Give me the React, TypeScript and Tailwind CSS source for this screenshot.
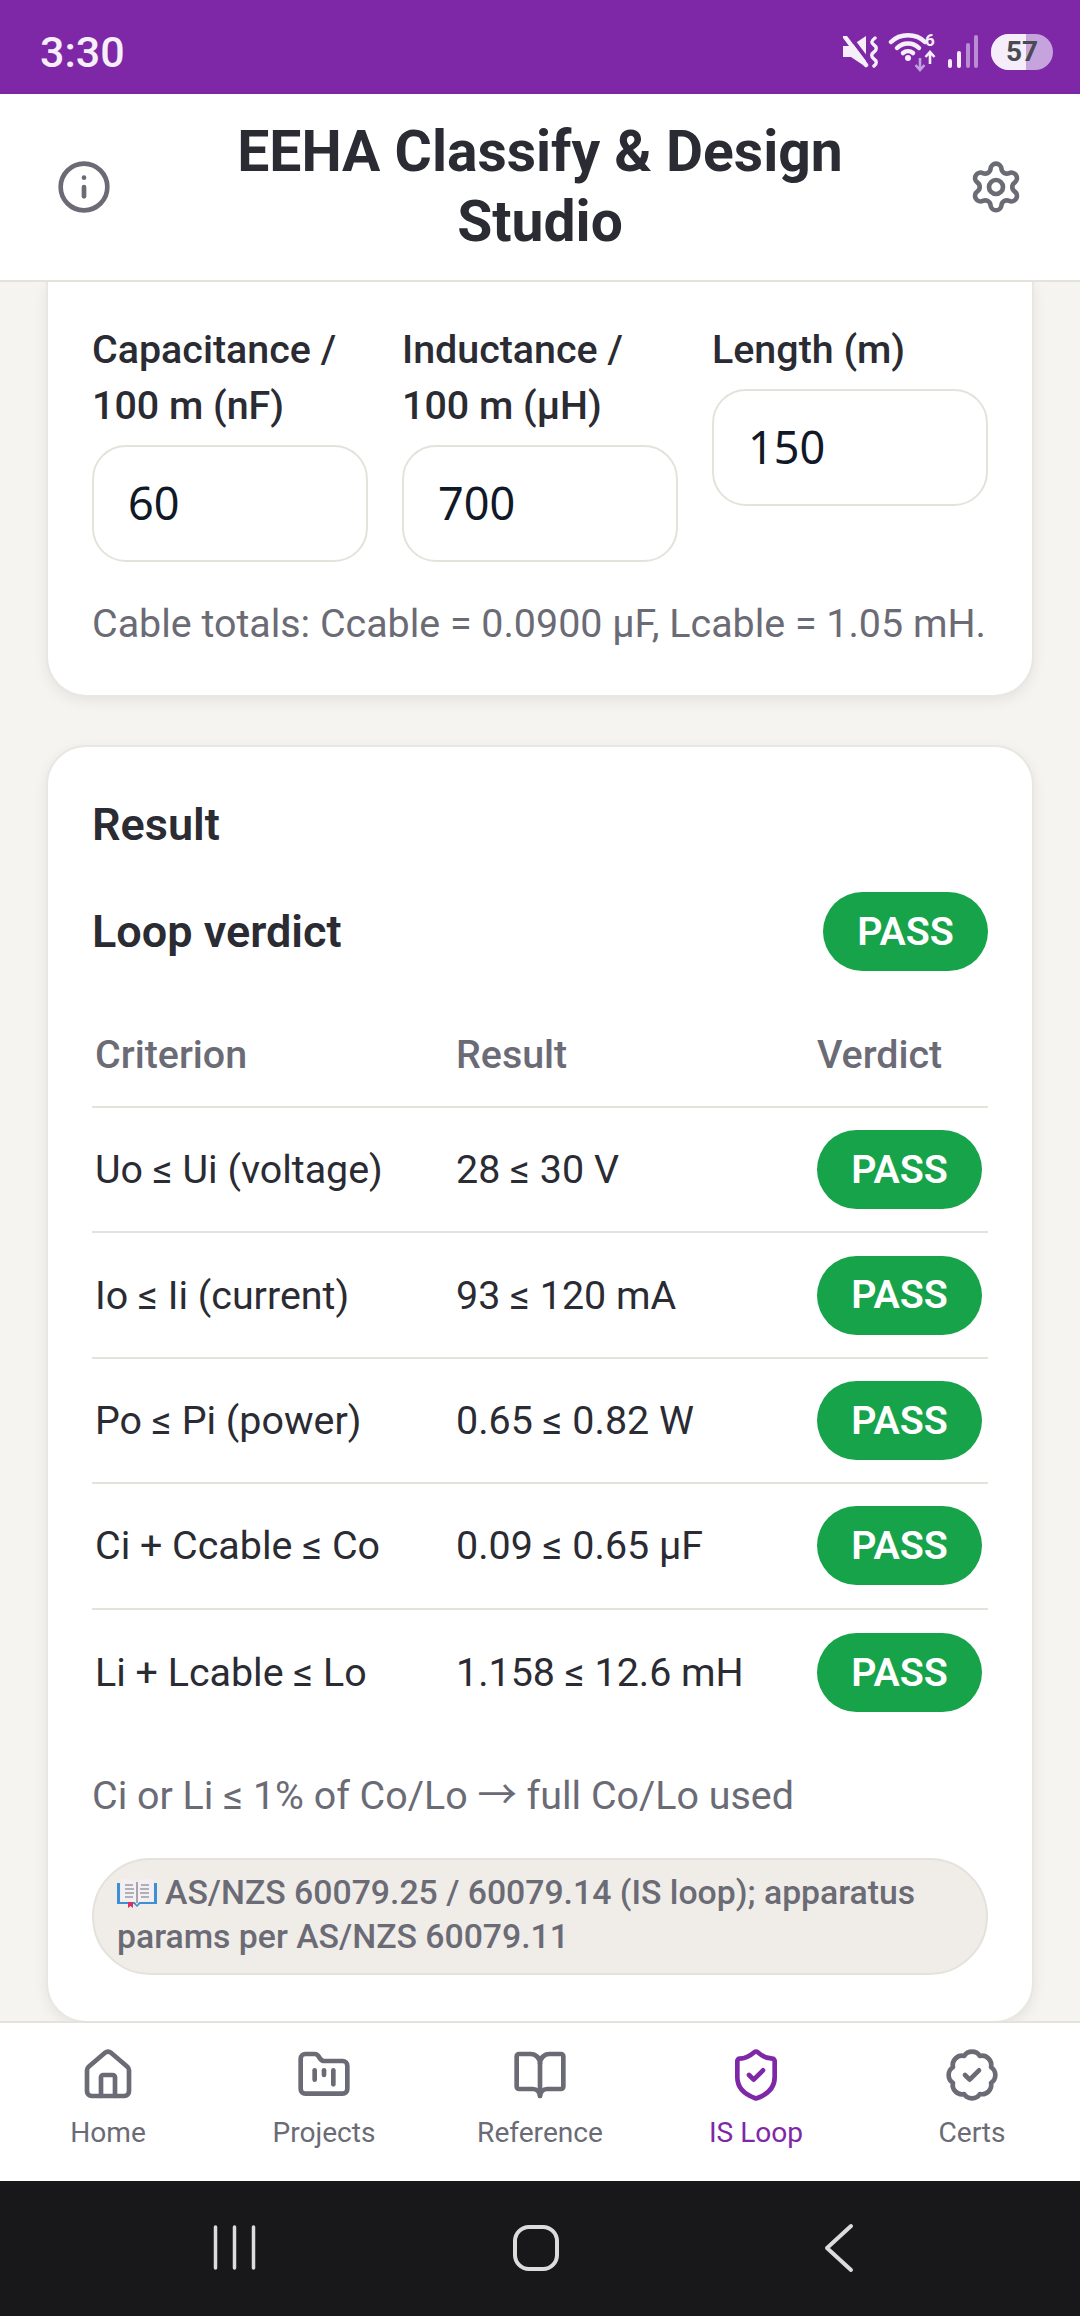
import { BadgeCheck, BookOpen, FolderKanban, House, Info, Settings, ShieldCheck } from 'lucide-react'

const rows = [
  ['Uo ≤ Ui (voltage)', '28 ≤ 30 V'],
  ['Io ≤ Ii (current)', '93 ≤ 120 mA'],
  ['Po ≤ Pi (power)', '0.65 ≤ 0.82 W'],
  ['Ci + Ccable ≤ Co', '0.09 ≤ 0.65 µF'],
  ['Li + Lcable ≤ Lo', '1.158 ≤ 12.6 mH'],
]

const navItems = [
  { label: 'Home', icon: House },
  { label: 'Projects', icon: FolderKanban },
  { label: 'Reference', icon: BookOpen },
  { label: 'IS Loop', icon: ShieldCheck, active: true },
  { label: 'Certs', icon: BadgeCheck },
]

function Pass() {
  return (
    <span className="flex h-[79px] w-[165px] items-center justify-center rounded-full bg-[#16a34a] text-[39.4px] leading-none font-semibold text-white">
      PASS
    </span>
  )
}

function Field({ label, value }: { label: string; value: string }) {
  return (
    <div>
      <label className="mb-[11px] block text-[39.4px] leading-[56px] font-medium text-[#2a2b33]">{label}</label>
      <div className="flex h-[117px] items-center rounded-[34px] border-2 border-[#e4e2db] bg-white pb-[2px] pl-[34px] font-['Noto_Sans',sans-serif] text-[45px] text-[#111827]">
        {value}
      </div>
    </div>
  )
}

function StatusIcons() {
  return (
    <div className="flex items-center">
      {/* mute */}
      <svg width="35" height="32" viewBox="0 0 35 32" className="mr-[10px]">
        <path d="M0 10h8L23 0v31L8 21H0z" fill="#f6effa" />
        <path d="M5 -2l22 29" stroke="#7e28a8" strokeWidth="4" />
        <path d="M2 1l21 28" stroke="#f6effa" strokeWidth="4.500" strokeLinecap="round" />
        <path d="M32 2c-4 3-4 5-1 7s3 5 0 7-3 5 0 7 3 5 0 7" stroke="#f6effa" strokeWidth="3.400" fill="none" strokeLinecap="round" />
      </svg>
      {/* wifi */}
      <div className="relative mr-[11px] h-[40px] w-[49px]">
        <svg width="49" height="40" viewBox="0 0 49 40" className="absolute top-0 left-0">
          <path d="M3 10c9-9 25-9 34 0" stroke="#f6effa" strokeWidth="4.500" fill="none" strokeLinecap="round" />
          <path d="M9 16c6-6 16-6 22 0" stroke="#f6effa" strokeWidth="4.500" fill="none" strokeLinecap="round" />
          <path d="M15 21c3-2.500 7-2.500 10 0" stroke="#f6effa" strokeWidth="4.500" fill="none" strokeLinecap="round" />
          <circle cx="20" cy="26" r="3" fill="#f6effa" />
          <path d="M32 26v12M27.500 33l4.500 5 4.500-5" stroke="#c39fdc" strokeWidth="2.600" fill="none" />
          <path d="M42 32V20M37.500 25l4.500-5 4.500 5" stroke="#f6effa" strokeWidth="2.600" fill="none" />
        </svg>
        <span className="absolute top-[-1px] left-[37px] text-[17px] leading-[18px] font-bold text-[#f6effa]">6</span>
      </div>
      {/* signal */}
      <svg width="30" height="34" viewBox="0 0 30 34" className="mr-[13px]">
        <rect x="0" y="24" width="4" height="9" rx="2" fill="#f6effa" />
        <rect x="9" y="16" width="4" height="17" rx="2" fill="#f6effa" />
        <rect x="18" y="8" width="4" height="25" rx="2" fill="#b98cd4" />
        <rect x="26" y="0" width="4" height="33" rx="2" fill="#b98cd4" />
      </svg>
      {/* battery */}
      <div className="relative flex h-[36px] w-[62px] items-center justify-center overflow-hidden rounded-full bg-[#c7a3de]">
        <div className="absolute inset-y-0 left-0 w-[35px] bg-[#f5eefa]" />
        <span className="relative text-[28px] leading-none font-bold text-[#4a4a52]">57</span>
      </div>
    </div>
  )
}

export default function App() {
  return (
    <div className="flex h-[2316px] w-[1080px] flex-col overflow-hidden bg-[#f5f4f0] font-['Roboto',sans-serif]">
      <div className="flex h-[94px] shrink-0 items-center justify-between bg-[#7e28a8] pt-[10px] pr-[27px] pl-[40px]">
        <span className="text-[43px] font-medium text-[#f6effa]">3:30</span>
        <StatusIcons />
      </div>

      <header className="flex h-[188px] shrink-0 items-center justify-between border-b-2 border-[#e4e2db] bg-white px-[56px]">
        <Info size={56} strokeWidth={2} className="text-[#6b6b76]" />
        <h1 className="w-[720px] text-center text-[57px] leading-[70px] font-bold text-[#2a2b33]">EEHA Classify &amp; Design Studio</h1>
        <Settings size={56} strokeWidth={2} className="text-[#6b6b76]" />
      </header>

      <main className="flex h-[1739px] shrink-0 flex-col gap-[48px] overflow-hidden px-[46px]">
        <section className="rounded-b-[40px] border-x-2 border-b-2 border-[#e9e7e1] bg-white px-[44px] pt-[40px] pb-[43px] shadow-[0_4px_14px_rgba(0,0,0,0.07)]">
          <div className="grid grid-cols-3 items-start gap-[34px]">
            <Field label="Capacitance / 100 m (nF)" value="60" />
            <Field label="Inductance / 100 m (µH)" value="700" />
            <Field label="Length (m)" value="150" />
          </div>
          <p className="mt-[34px] text-[39.4px] leading-[56px] whitespace-nowrap text-[#6b6b76]">Cable totals: Ccable = 0.0900 µF, Lcable = 1.05 mH.</p>
        </section>

        <section className="rounded-[40px] border-2 border-[#e9e7e1] bg-white px-[44px] pt-[46px] pb-[46px] shadow-[0_4px_14px_rgba(0,0,0,0.07)]">
          <h2 className="text-[45px] leading-[63px] font-semibold text-[#2a2b33]">Result</h2>
          <div className="mt-[36px] flex h-[79px] items-center justify-between">
            <span className="text-[45px] font-semibold text-[#2a2b33]">Loop verdict</span>
            <Pass />
          </div>

          <div className="mt-[22px] grid h-[115px] grid-cols-[361px_361px_1fr] items-center border-b-2 border-[#e4e2db] pt-[10px] pl-[3px] text-[39.4px] font-medium text-[#6b6b76]">
            <span>Criterion</span>
            <span>Result</span>
            <span>Verdict</span>
          </div>
          {rows.map(([name, result], i) => (
            <div
              key={name}
              className={`grid h-[125.4px] grid-cols-[361px_361px_1fr] items-center pl-[3px] text-[39.4px] text-[#2a2b33] ${i < rows.length - 1 ? 'border-b-2 border-[#e4e2db]' : ''}`}
            >
              <span>{name}</span>
              <span>{result}</span>
              <Pass />
            </div>
          ))}

          <p className="mt-[29px] text-[39.4px] leading-[56px] text-[#6b6b76]">
            Ci or Li ≤ 1% of Co/Lo <span className="font-['Noto_Sans_CJK_SC',sans-serif]">→</span> full Co/Lo used
          </p>

          <div className="mt-[34px] flex h-[117px] flex-col justify-center rounded-full border-2 border-[#e4e2db] bg-[#f0ede8] px-[23px] pb-[2px] text-[33.750px] leading-[44px] font-medium text-[#6b6b76]">
            <p>
              <svg width="40" height="30" viewBox="0 0 40 30" className="mr-[8px] inline-block align-[-4px]">
                <path d="M0 5h3v19h15l2 3 2-3h15V5h3v21H23l-3 3-3-3H0z" fill="#3f8fd6" />
                <path d="M4 2c6-2 12-1 16 2 4-3 10-4 16-2v21c-6-1-12 0-16 2-4-2-10-3-16-2z" fill="#f4eff2" />
                <path d="M8 7h8M8 11h9M8 15h9M8 19h8M24 7h8M23 11h9M23 15h9M24 19h8" stroke="#b0b0b8" strokeWidth="2" />
                <path d="M20 4v21" stroke="#8d8d96" strokeWidth="1.500" />
                <path d="M11 24h5v6l-2.500-2-2.500 2z" fill="#dc2f5e" />
              </svg>
              AS/NZS 60079.25 / 60079.14 (IS loop); apparatus params per AS/NZS 60079.11
            </p>
          </div>
        </section>
      </main>

      <nav className="grid h-[160px] shrink-0 grid-cols-5 border-t-2 border-[#e4e2db] bg-white pt-[24px]">
        {navItems.map(({ label, icon: Icon, active }) => (
          <div key={label} className={`flex flex-col items-center ${active ? 'text-[#7e28a8]' : 'text-[#6b6b76]'}`}>
            <Icon size={56} strokeWidth={2} />
            <span className="mt-[9px] text-[28.100px] leading-[42px]">{label}</span>
          </div>
        ))}
      </nav>

      <div className="flex h-[135px] shrink-0 items-center bg-[#18181a]">
        <svg width="1080" height="135" viewBox="0 0 1080 135">
          <path d="M215.500 46v41M234.500 46v41M253.500 46v41" stroke="#dcdcdc" strokeWidth="3.500" strokeLinecap="round" />
          <rect x="515" y="46" width="42" height="42" rx="14" stroke="#dcdcdc" strokeWidth="4" fill="none" />
          <path d="M851 45l-24 22 24 22" stroke="#dcdcdc" strokeWidth="4" fill="none" strokeLinecap="round" strokeLinejoin="round" />
        </svg>
      </div>
    </div>
  )
}
